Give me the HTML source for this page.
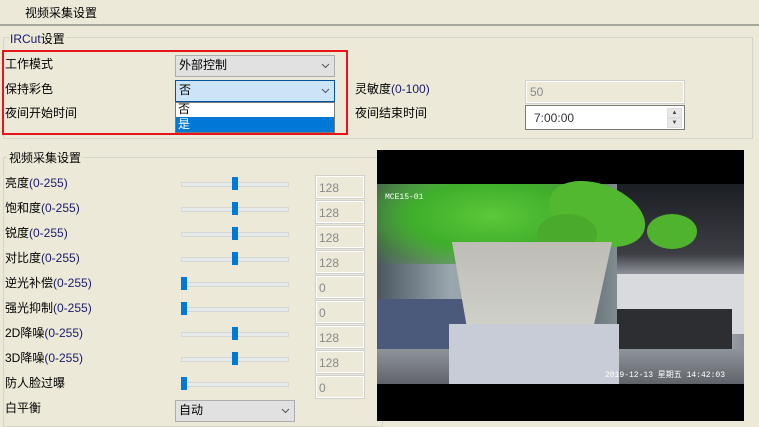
<!DOCTYPE html>
<html><head><meta charset="utf-8"><style>
*{box-sizing:border-box;margin:0;padding:0}
body{width:759px;height:421px;overflow:hidden;background:#ECE9D8;font-family:"Liberation Sans","Noto Sans CJK SC",sans-serif;font-size:12px;color:#000;position:relative}
.a{position:absolute;white-space:nowrap}
.sel{position:absolute;border:1px solid #adadad;background:#e1e1e1;padding-left:3px;line-height:19px;font-size:12px}
.sel svg{position:absolute;right:4px;top:7px}
.tr{position:absolute;left:181px;width:108px;height:5px;background:#e7eaea;border:1px solid #d6d6d6}
.th{position:absolute;width:6px;height:13px;background:#0078d7}
.vb{position:absolute;left:315px;width:50px;height:24px;border:1px solid #d0d0d0;box-shadow:inset 0 0 0 1px #fff;color:#8a8a8a;padding:5px 0 0 3px;font-size:12px}
.lb{position:absolute;left:5px;font-size:12px}
.lb span{color:#1a1a6a}
</style></head><body>
<div class="a" style="left:25px;top:4px">视频采集设置</div>
<div class="a" style="left:0;top:24px;width:759px;height:2px;background:#a9a89f"></div>
<div class="a" style="left:3px;top:37px;width:750px;height:102px;border:1px solid #d5d4cc"></div>
<div class="a" style="left:9px;top:30px;background:#ECE9D8;padding:0 1px;color:#000"><span style="color:#1a1a6a">IRCut</span>设置</div>
<div class="a" style="left:2px;top:50px;width:346px;height:85px;border:2px solid #e8141c"></div>
<div class="lb" style="top:55px">工作模式</div>
<div class="lb" style="top:80px">保持彩色</div>
<div class="lb" style="top:104px">夜间开始时间</div>
<div class="sel" style="left:175px;top:55px;width:160px;height:22px">外部控制<svg width="9" height="6"><path d="M1 1L4.5 4.5L8 1" stroke="#555" fill="none"/></svg></div>
<div class="sel" style="left:175px;top:80px;width:160px;height:22px;background:#cce4f7;border-color:#005499">否<svg width="9" height="6"><path d="M1 1L4.5 4.5L8 1" stroke="#555" fill="none"/></svg></div>
<div class="a" style="left:175px;top:102px;width:160px;height:31px;border:1px solid #7a7a7a;background:#fff"></div>
<div class="a" style="left:176px;top:102px;width:158px;height:15px;line-height:15px;padding-left:2px">否</div>
<div class="a" style="left:176px;top:117px;width:158px;height:15px;line-height:15px;padding-left:2px;background:#0078d7;color:#fff">是</div>
<div class="a" style="left:355px;top:80px">灵敏度<span style="color:#1a1a6a">(0-100)</span></div>
<div class="a" style="left:355px;top:104px">夜间结束时间</div>
<div class="a" style="left:525px;top:80px;width:160px;height:24px;border:1px solid #d0d0d0;box-shadow:inset 0 0 0 1px #fff;color:#8a8a8a;padding:4px 0 0 4px">50</div>
<div class="a" style="left:525px;top:105px;width:160px;height:25px;border:1px solid #7a7a7a;background:#fff;color:#333;padding:5px 0 0 8px">7:00:00</div>
<div class="a" style="left:667px;top:108px;width:15px;height:10px;background:#e8e8e8;border:1px solid #ddd;font-size:6px;text-align:center;line-height:8px;color:#444">▲</div>
<div class="a" style="left:667px;top:118px;width:15px;height:10px;background:#e8e8e8;border:1px solid #ddd;font-size:6px;text-align:center;line-height:8px;color:#444">▼</div>
<div class="a" style="left:3px;top:157px;width:380px;height:270px;border:1px solid #d5d4cc"></div>
<div class="a" style="left:7px;top:149px;background:#ECE9D8;padding:0 2px">视频采集设置</div>
<div class="lb" style="top:174px">亮度<span>(0-255)</span></div>
<div class="lb" style="top:199px">饱和度<span>(0-255)</span></div>
<div class="lb" style="top:224px">锐度<span>(0-255)</span></div>
<div class="lb" style="top:249px">对比度<span>(0-255)</span></div>
<div class="lb" style="top:274px">逆光补偿<span>(0-255)</span></div>
<div class="lb" style="top:299px">强光抑制<span>(0-255)</span></div>
<div class="lb" style="top:324px">2D降噪<span>(0-255)</span></div>
<div class="lb" style="top:349px">3D降噪<span>(0-255)</span></div>
<div class="lb" style="top:374px">防人脸过曝</div>
<div class="lb" style="top:399px">白平衡</div>
<div class="tr" style="top:182px"></div><div class="th" style="left:232px;top:177px"></div><div class="vb" style="top:175px">128</div>
<div class="tr" style="top:207px"></div><div class="th" style="left:232px;top:202px"></div><div class="vb" style="top:200px">128</div>
<div class="tr" style="top:232px"></div><div class="th" style="left:232px;top:227px"></div><div class="vb" style="top:225px">128</div>
<div class="tr" style="top:257px"></div><div class="th" style="left:232px;top:252px"></div><div class="vb" style="top:250px">128</div>
<div class="tr" style="top:282px"></div><div class="th" style="left:181px;top:277px"></div><div class="vb" style="top:275px">0</div>
<div class="tr" style="top:307px"></div><div class="th" style="left:181px;top:302px"></div><div class="vb" style="top:300px">0</div>
<div class="tr" style="top:332px"></div><div class="th" style="left:232px;top:327px"></div><div class="vb" style="top:325px">128</div>
<div class="tr" style="top:357px"></div><div class="th" style="left:232px;top:352px"></div><div class="vb" style="top:350px">128</div>
<div class="tr" style="top:382px"></div><div class="th" style="left:181px;top:377px"></div><div class="vb" style="top:375px">0</div>
<div class="sel" style="left:175px;top:400px;width:120px;height:22px">自动<svg width="9" height="6"><path d="M1 1L4.5 4.5L8 1" stroke="#555" fill="none"/></svg></div>
<div class="a" style="left:377px;top:150px;width:367px;height:271px;background:#000;overflow:hidden">
 <div class="a" style="left:0;top:34px;width:367px;height:200px;background:linear-gradient(90deg,#4a5560 0%,#9aa7ae 20%,#6e7a80 60%,#c9ccd0 85%,#8a9096 100%)">
  <div class="a" style="left:240px;top:0;width:127px;height:100px;background:linear-gradient(180deg,#1b1e22,#3c3e44 70%,#b8bcc2)"></div>
  <div class="a" style="left:240px;top:90px;width:127px;height:60px;background:#d8dade"></div>
  <div class="a" style="left:0;top:0;width:230px;height:80px;background:radial-gradient(ellipse at 50% 40%,#5cc83a 0%,#3fae2a 50%,rgba(60,140,40,.5) 80%,rgba(60,120,40,0) 100%)"></div>
  <div class="a" style="left:170px;top:0;width:100px;height:60px;border-radius:50%;background:#52b830;transform:rotate(20deg)"></div>
  <div class="a" style="left:160px;top:30px;width:60px;height:40px;border-radius:50%;background:#4aaa2c"></div>
  <div class="a" style="left:270px;top:30px;width:50px;height:35px;border-radius:50%;background:#4fb32e"></div>
  <div class="a" style="left:0;top:115px;width:100px;height:60px;background:#4b5a7a"></div>
  <div class="a" style="left:75px;top:58px;width:160px;height:110px;background:linear-gradient(180deg,#bdbdb6,#d6d6d0);clip-path:polygon(0 0,100% 0,85% 100%,12% 100%)"></div>
  <div class="a" style="left:240px;top:125px;width:115px;height:45px;background:#2c2e32"></div>
  <div class="a" style="left:0;top:165px;width:367px;height:35px;background:linear-gradient(180deg,#8f949b,#60646a)"></div>
  <div class="a" style="left:72px;top:140px;width:170px;height:60px;background:#c8ccd6"></div>
  <div class="a" style="left:8px;top:9px;color:#fff;font-size:8px;font-family:'Liberation Mono',monospace">MCE15-01</div>
  <div class="a" style="left:228px;top:185px;color:#fff;font-size:8px;font-family:'Liberation Mono','Noto Sans CJK SC',monospace">2019-12-13 星期五 14:42:03</div>
 </div>
</div>
</body></html>
